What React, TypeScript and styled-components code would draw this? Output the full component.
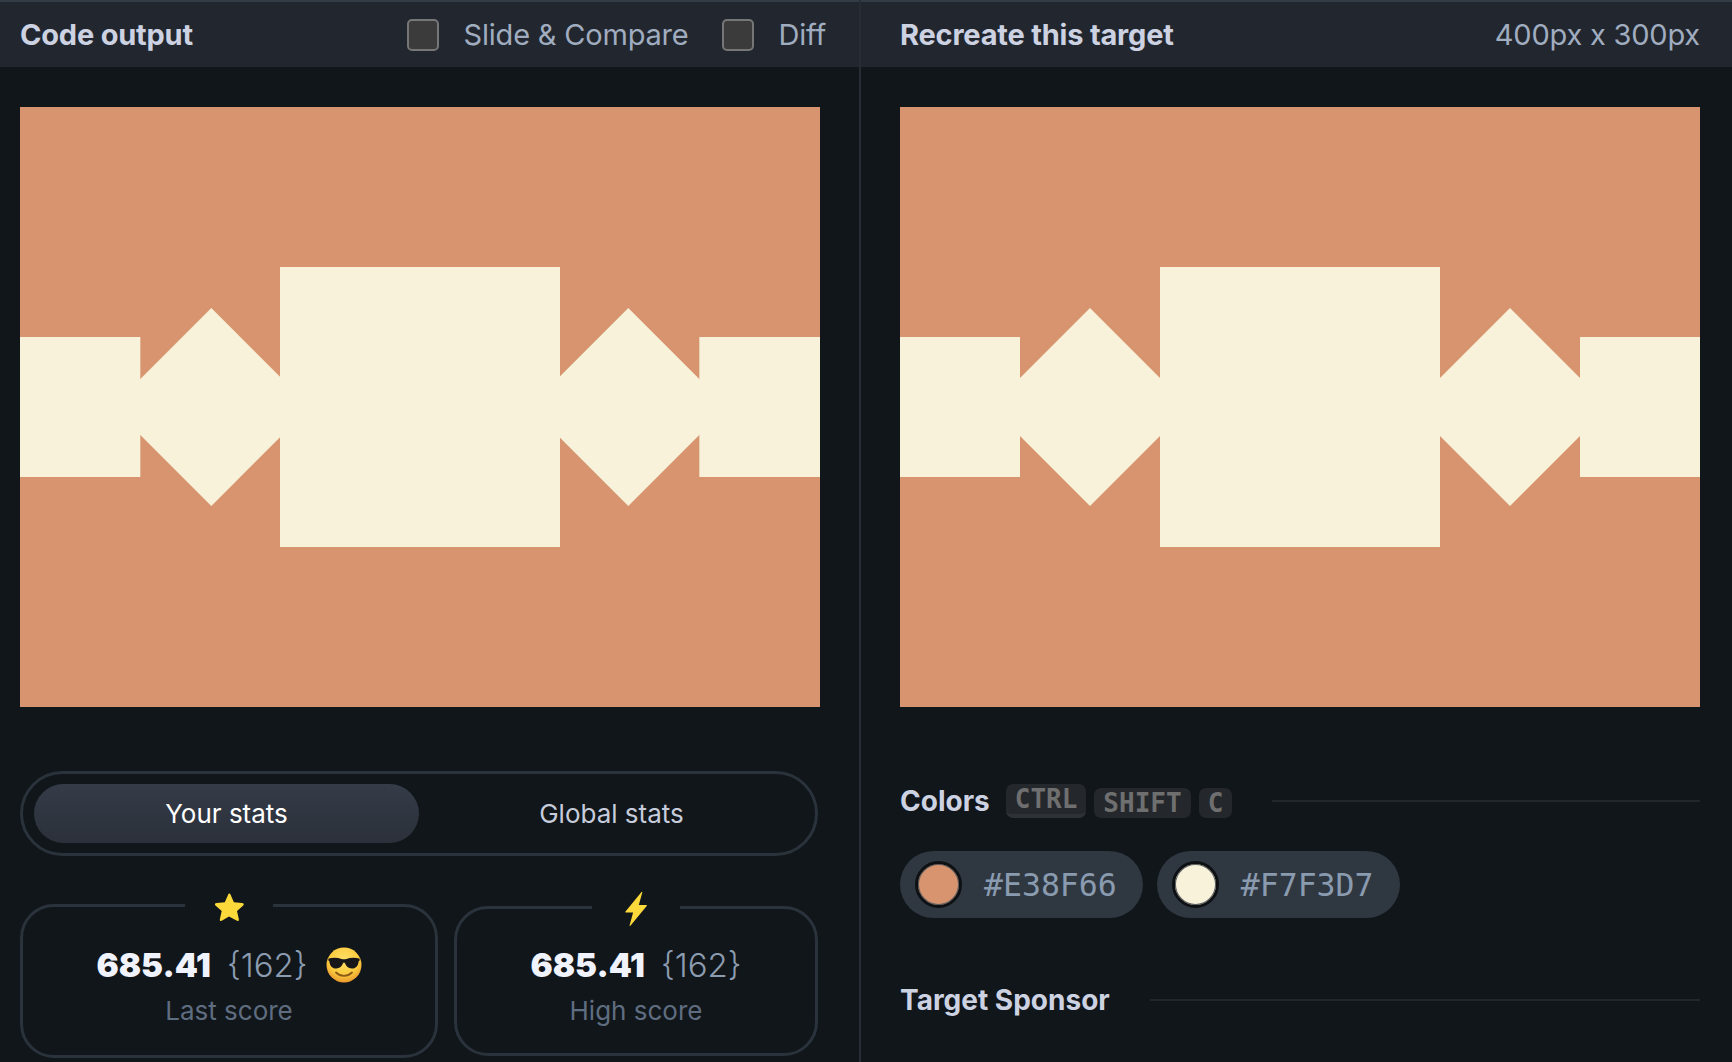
import React from "react";
import styled, { createGlobalStyle } from "styled-components";

const ORANGE = "#d8946e";
const CREAM = "#f7f2d9";

const GlobalStyle = createGlobalStyle`
  html, body {
    margin: 0;
    height: 100%;
    overflow: hidden;
    background: #11161a;
    font-family: Inter, "Liberation Sans", sans-serif;
  }
`;

type TargetProps = {
  sideWidth: number;
  leftCenter: number;
  rightCenter: number;
};

const TargetPicture = ({ sideWidth, leftCenter, rightCenter }: TargetProps) => (
  <PictureSvg viewBox="0 0 800 600">
    <rect width="800" height="600" fill={ORANGE} />
    <rect x="0" y="230" width={sideWidth} height="140" fill={CREAM} />
    <rect
      x={800 - sideWidth - (sideWidth === 120 ? 0 : 0.34)}
      y="230"
      width={sideWidth + 1}
      height="140"
      fill={CREAM}
    />
    <rect x="260" y="160" width="280" height="280" fill={CREAM} />
    {[leftCenter, rightCenter].map((cx) => (
      <polygon
        key={cx}
        points={`${cx},201 ${cx + 99},300 ${cx},399 ${cx - 99},300`}
        fill={CREAM}
      />
    ))}
  </PictureSvg>
);

const StarIcon = () => (
  <svg width="32" height="30" viewBox="0 0 32 30">
    <path
      d="M16 1.5c.8 0 1.3.5 1.7 1.4l3.2 7.4 8 .7c2 .2 2.5 1.5 1.1 2.8l-6 5.3 1.8 7.8c.4 1.9-.7 2.7-2.3 1.7L16 24.5l-6.800 4.100c-1.600 1-2.700.2-2.300-1.700l1.800-7.800-6-5.300c-1.400-1.300-.9-2.600 1.100-2.800l8-.7 3.200-7.400c.4-.9.900-1.400 1.700-1.400z"
      fill="#fcd93a"
    />
  </svg>
);

const BoltIcon = () => (
  <svg width="24" height="36" viewBox="0 0 24 36">
    <path
      d="M17.500 1 1.500 20.500c-.4.6 0 1 .6 1h7L5.600 34.300c-.2.8.3 1.100.8.500L22.700 14.900c.4-.6.100-1-.6-1h-7.300L18.300 1.500c.2-.8-.3-1.100-.8-.5z"
      fill="#fcd93a"
    />
  </svg>
);

const CoolEmoji = () => (
  <svg width="36" height="36" viewBox="0 0 36 36">
    <defs>
      <radialGradient id="emojiFace" cx="50%" cy="35%" r="68%">
        <stop offset="0%" stopColor="#ffe169" />
        <stop offset="65%" stopColor="#fbc93d" />
        <stop offset="100%" stopColor="#e8912b" />
      </radialGradient>
    </defs>
    <circle cx="18" cy="18" r="17.500" fill="url(#emojiFace)" />
    <path
      d="M2.500 11.500c5-1 9.500-.8 13 .4 1.600.5 3.400.5 5 0 3.500-1.200 8-1.400 13-.4l.2 2c-.8.3-1 .8-1.200 1.700-.6 4-3 6.300-6.700 6.300-3.500 0-5.800-2.100-6.800-5.200-.4-1.200-1.600-1.200-2 0-1 3.100-3.300 5.200-6.800 5.200-3.700 0-6.100-2.300-6.700-6.300-.2-.9-.4-1.400-1.200-1.700z"
      fill="#17171a"
    />
    <path
      d="M10 25.500c2.200 2.200 5 3.300 8 3.300s5.800-1.100 8-3.300"
      fill="none"
      stroke="#8a5a17"
      strokeWidth="1.800"
      strokeLinecap="round"
    />
  </svg>
);

const App = () => {
  return (
    <>
      <GlobalStyle />
      <Page>
        <LeftPanel>
          <Header>
            <HeaderTitle>Code output</HeaderTitle>
            <HeaderOptions>
              <OptionBox type="checkbox" readOnly />
              <OptionLabel>Slide &amp; Compare</OptionLabel>
              <OptionBox type="checkbox" readOnly />
              <OptionLabel>Diff</OptionLabel>
            </HeaderOptions>
          </Header>
          <PictureSlot>
            <TargetPicture sideWidth={120.33} leftCenter={191.33} rightCenter={608.33} />
          </PictureSlot>
          <StatsToggle>
            <StatsTab $active>Your stats</StatsTab>
            <StatsTab>Global stats</StatsTab>
          </StatsToggle>
          <CardRow>
            <ScoreCard $wide>
              <CardBadge>
                <StarIcon />
              </CardBadge>
              <ScoreLine>
                <ScoreValue>685.41</ScoreValue>
                <ScoreCount>{"{162}"}</ScoreCount>
                <EmojiSlot>
                  <CoolEmoji />
                </EmojiSlot>
              </ScoreLine>
              <ScoreLabel>Last score</ScoreLabel>
            </ScoreCard>
            <ScoreCard>
              <CardBadge>
                <BoltIcon />
              </CardBadge>
              <ScoreLine>
                <ScoreValue>685.41</ScoreValue>
                <ScoreCount>{"{162}"}</ScoreCount>
              </ScoreLine>
              <ScoreLabel>High score</ScoreLabel>
            </ScoreCard>
          </CardRow>
        </LeftPanel>
        <RightPanel>
          <Header $wide>
            <HeaderTitle>Recreate this target</HeaderTitle>
            <OptionLabel>400px x 300px</OptionLabel>
          </Header>
          <PictureSlot>
            <TargetPicture sideWidth={120} leftCenter={190} rightCenter={610} />
          </PictureSlot>
          <ColorsHeading>
            <SectionTitle>Colors</SectionTitle>
            <KeyCap $tall>CTRL</KeyCap>
            <KeyCap>SHIFT</KeyCap>
            <KeyCap>C</KeyCap>
            <SectionRule $offset={40} />
          </ColorsHeading>
          <ChipRow>
            <ColorChip>
              <Swatch $color={ORANGE} />
              <ChipText>#E38F66</ChipText>
            </ColorChip>
            <ColorChip>
              <Swatch $color={CREAM} />
              <ChipText>#F7F3D7</ChipText>
            </ColorChip>
          </ChipRow>
          <SponsorHeading>
            <SectionTitle>Target Sponsor</SectionTitle>
            <SectionRule $offset={40} />
          </SponsorHeading>
        </RightPanel>
      </Page>
    </>
  );
};

const Page = styled.div`
  display: flex;
  width: 1732px;
  height: 1062px;
  overflow: hidden;
  background: #11161a;
`;

const LeftPanel = styled.section`
  width: 859px;
  flex: none;
  border-right: 2px solid #272d35;
`;

const RightPanel = styled.section`
  flex: 1;
  min-width: 0;
`;

const Header = styled.header<{ $wide?: boolean }>`
  display: flex;
  align-items: center;
  justify-content: space-between;
  height: 65px;
  padding: 0 ${(p) => (p.$wide ? "32px 0 39px" : "0 0 20px")};
  border-top: 2px solid #333b46;
  background: #22272f;
`;

const HeaderTitle = styled.h2`
  margin: 0;
  font-size: 29px;
  font-weight: 700;
  letter-spacing: -0.2px;
  color: #cdd2e2;
`;

const HeaderOptions = styled.div`
  display: flex;
  align-items: center;
`;

const OptionBox = styled.input`
  appearance: none;
  box-sizing: border-box;
  width: 32px;
  height: 32px;
  margin: 0 25px 0 0;
  background: #3b3b3b;
  border: 2px solid #767676;
  border-radius: 5px;
`;

const OptionLabel = styled.span`
  margin-right: 33px;
  font-size: 29px;
  font-weight: 400;
  letter-spacing: -0.2px;
  color: #a0acbf;

  ${Header} > & {
    margin-right: 0;
  }
`;

const PictureSlot = styled.div`
  width: 800px;
  margin: 40px 0 0 20px;

  ${RightPanel} & {
    margin-left: 39px;
  }
`;

const PictureSvg = styled.svg`
  display: block;
  width: 800px;
  height: 600px;
`;

const StatsToggle = styled.div`
  box-sizing: border-box;
  display: flex;
  width: 798px;
  height: 85px;
  margin: 64px 0 0 20px;
  padding: 10px 11px;
  border: 3px solid #2a323b;
  border-radius: 43px;
`;

const StatsTab = styled.button<{ $active?: boolean }>`
  flex: 1;
  border: 0;
  border-radius: 30px;
  font-family: inherit;
  font-size: 26px;
  font-weight: 400;
  color: ${(p) => (p.$active ? "#ffffff" : "#c6ccdb")};
  background: ${(p) =>
    p.$active ? "linear-gradient(180deg, #353c47 0%, #2b303a 100%)" : "transparent"};
`;

const CardRow = styled.div`
  display: flex;
  align-items: center;
  gap: 16px;
  width: 798px;
  margin: 48px 0 0 20px;
`;

const ScoreCard = styled.div<{ $wide?: boolean }>`
  position: relative;
  box-sizing: border-box;
  display: flex;
  flex-direction: column;
  align-items: center;
  justify-content: center;
  width: ${(p) => (p.$wide ? "418px" : "364px")};
  height: ${(p) => (p.$wide ? "154px" : "150px")};
  padding-top: 6px;
  border: 3px solid #2a323b;
  border-radius: 34px;
`;

const CardBadge = styled.div`
  position: absolute;
  top: -18px;
  left: 50%;
  display: flex;
  align-items: center;
  justify-content: center;
  width: 88px;
  height: 36px;
  transform: translateX(-50%);
  background: #11161a;
  clip-path: polygon(0 14px, 4px 18px, 4px 18px, 84px 18px, 88px 14px, 88px 100%, 0 100%);
  clip-path: none;
  background: linear-gradient(#11161a, #11161a) center / 100% 8px no-repeat;
`;

const ScoreLine = styled.div`
  display: flex;
  align-items: center;
  height: 44px;
`;

const ScoreValue = styled.span`
  font-size: 33px;
  font-weight: 900;
  color: #f0f3fb;
`;

const ScoreCount = styled.span`
  margin-left: 16px;
  font-size: 33px;
  font-weight: 300;
  color: #8c9cb0;
`;

const EmojiSlot = styled.span`
  display: flex;
  margin-left: 18px;
`;

const ScoreLabel = styled.span`
  margin-top: 8px;
  font-size: 26px;
  font-weight: 400;
  color: #5f6d80;
`;

const ColorsHeading = styled.div`
  display: flex;
  align-items: flex-end;
  gap: 8px;
  height: 34px;
  margin: 77px 32px 0 39px;
`;

const SponsorHeading = styled.div`
  display: flex;
  align-items: center;
  height: 34px;
  margin: 65px 32px 0 39px;
`;

const SectionTitle = styled.h3`
  align-self: center;
  margin: 0 8px 0 0;
  font-size: 28px;
  font-weight: 700;
  color: #cdd2e2;
`;

const KeyCap = styled.kbd<{ $tall?: boolean }>`
  box-sizing: border-box;
  height: ${(p) => (p.$tall ? "34px" : "30px")};
  padding: 0 9px;
  border-bottom: ${(p) => (p.$tall ? "4px solid #2e3135" : "0")};
  border-radius: 7px;
  background: #24272b;
  font-family: "DejaVu Sans Mono", monospace;
  font-size: 26px;
  font-weight: 700;
  line-height: 30px;
  color: #6f6f6f;
`;

const SectionRule = styled.div<{ $offset: number }>`
  flex: 1;
  align-self: center;
  height: 2px;
  margin-left: ${(p) => p.$offset - 8}px;
  background: #23272d;
`;

const ChipRow = styled.div`
  display: flex;
  gap: 14px;
  margin: 33px 0 0 39px;
`;

const ColorChip = styled.div`
  display: flex;
  align-items: center;
  gap: 22px;
  height: 67px;
  padding: 0 26px 0 15px;
  border-radius: 34px;
  background: #2f3740;
`;

const Swatch = styled.span<{ $color: string }>`
  box-sizing: border-box;
  width: 47px;
  height: 47px;
  border: 3px solid #0e1114;
  border-radius: 50%;
  background: ${(p) => p.$color};
  box-shadow: inset 0 0 0 1px #5b5f63;
`;

const ChipText = styled.span`
  font-family: "DejaVu Sans Mono", monospace;
  font-size: 31.500px;
  color: #8a9bb0;
`;

export default App;
